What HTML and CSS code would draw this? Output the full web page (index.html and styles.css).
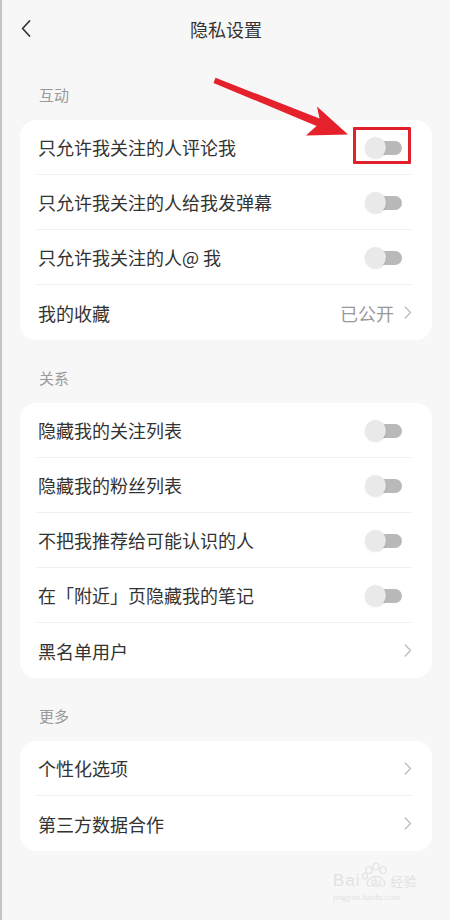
FILE: index.html
```html
<!DOCTYPE html>
<html lang="zh-CN">
<head>
<meta charset="utf-8">
<title>隐私设置</title>
<link rel="stylesheet" href="styles.css">
</head>
<body>
<div class="page">
  <header class="topbar">
    <span class="back">
      <svg width="10" height="17" viewBox="0 0 10 17"><path d="M8.5 1 L1.6 8.5 L8.5 16" fill="none" stroke="#333" stroke-width="1.7" stroke-linecap="round" stroke-linejoin="round"/></svg>
    </span>
    <h1 class="title">隐私设置</h1>
  </header>

  <div class="section-label">互动</div>
  <div class="card">
    <div class="row"><span class="row-text">只允许我关注的人评论我</span><span class="toggle highlighted"><span class="track"></span><span class="thumb"></span><span class="mark"></span></span></div>
    <div class="row"><span class="row-text">只允许我关注的人给我发弹幕</span><span class="toggle"><span class="track"></span><span class="thumb"></span></span></div>
    <div class="row"><span class="row-text">只允许我关注的人@ 我</span><span class="toggle"><span class="track"></span><span class="thumb"></span></span></div>
    <div class="row"><span class="row-text">我的收藏</span><span class="value">已公开</span><span class="chev"><svg width="8" height="13" viewBox="0 0 8 13"><path d="M1.2 1 L6.5 6.5 L1.2 12" fill="none" stroke="#bdbdbd" stroke-width="1.3" stroke-linecap="round" stroke-linejoin="round"/></svg></span></div>
  </div>

  <div class="section-label">关系</div>
  <div class="card">
    <div class="row"><span class="row-text">隐藏我的关注列表</span><span class="toggle"><span class="track"></span><span class="thumb"></span></span></div>
    <div class="row"><span class="row-text">隐藏我的粉丝列表</span><span class="toggle"><span class="track"></span><span class="thumb"></span></span></div>
    <div class="row"><span class="row-text">不把我推荐给可能认识的人</span><span class="toggle"><span class="track"></span><span class="thumb"></span></span></div>
    <div class="row"><span class="row-text">在「附近」页隐藏我的笔记</span><span class="toggle"><span class="track"></span><span class="thumb"></span></span></div>
    <div class="row"><span class="row-text">黑名单用户</span><span class="chev"><svg width="8" height="13" viewBox="0 0 8 13"><path d="M1.2 1 L6.5 6.5 L1.2 12" fill="none" stroke="#bdbdbd" stroke-width="1.3" stroke-linecap="round" stroke-linejoin="round"/></svg></span></div>
  </div>

  <div class="section-label">更多</div>
  <div class="card">
    <div class="row"><span class="row-text">个性化选项</span><span class="chev"><svg width="8" height="13" viewBox="0 0 8 13"><path d="M1.2 1 L6.5 6.5 L1.2 12" fill="none" stroke="#bdbdbd" stroke-width="1.3" stroke-linecap="round" stroke-linejoin="round"/></svg></span></div>
    <div class="row"><span class="row-text">第三方数据合作</span><span class="chev"><svg width="8" height="13" viewBox="0 0 8 13"><path d="M1.2 1 L6.5 6.5 L1.2 12" fill="none" stroke="#bdbdbd" stroke-width="1.3" stroke-linecap="round" stroke-linejoin="round"/></svg></span></div>
  </div>

  <svg class="arrow" width="450" height="920" viewBox="0 0 450 920">
    <polygon points="215.5,77.8 319.5,118.5 317,106.5 348,134.5 306,135.5 316.5,125.9 213.5,83" fill="#e5212b"/>
  </svg>

  <div class="watermark">
    <div class="wm-top">
      <span class="wm-bai">Bai</span>
      <span class="wm-paw">
        <svg width="30" height="28" viewBox="0 0 30 28">
          <g fill="none" stroke="#e2e2e2" stroke-width="1.2">
            <ellipse cx="8" cy="8" rx="3" ry="3.5"/>
            <ellipse cx="15" cy="4.5" rx="3" ry="3.5"/>
            <ellipse cx="22" cy="8" rx="3" ry="3.5"/>
            <ellipse cx="4" cy="14" rx="2.5" ry="3"/>
            <path d="M8 24 C5 24 6 18 10 16 C13 14 17 14 20 16 C24 18 25 24 22 24 Z"/>
          </g>
          <text x="15" y="23" text-anchor="middle" font-size="9" fill="#e0e0e0" font-family="Liberation Sans, sans-serif">du</text>
        </svg>
      </span>
      <span class="wm-jy">经验</span>
    </div>
    <div class="wm-url">jingyan.baidu.com</div>
  </div>
</div>
</body>
</html>
```

FILE: styles.css
```css
* { box-sizing: border-box; }
html, body { margin: 0; padding: 0; }
body {
  width: 450px;
  height: 920px;
  overflow: hidden;
  background: #f7f7f7;
  font-family: "Noto Sans CJK SC", "Noto Sans", sans-serif;
  color: #333;
}
.page {
  position: relative;
  width: 450px;
  height: 920px;
  border-left: 2px solid #c4c4c4;
  background: #f7f7f7;
}
.topbar {
  height: 57px;
  display: flex;
  align-items: center;
  justify-content: center;
  position: relative;
}
.back {
  position: absolute;
  left: 19px;
  top: 20px;
  width: 10px;
  height: 17px;
  display: block;
}
.back svg { display: block; }
.title {
  margin: 0;
  font-size: 18px;
  font-weight: 400;
  color: #333;
  line-height: 22px;
}
.section-label {
  height: 63px;
  padding: 27px 0 0 37px;
  font-size: 15px;
  line-height: 22px;
  color: #9a9a9a;
}
.card {
  margin: 0 18px 0 18px;
  background: #fff;
  border-radius: 16px;
  padding: 0 20px 0 16px;
}
.row {
  height: 55px;
  display: flex;
  align-items: center;
  border-bottom: 1px solid #efefef;
}
.row:last-child { border-bottom: none; }
.row-text {
  flex: 1;
  font-size: 18px;
  line-height: 24px;
  color: #333;
  padding-left: 2px;
}
.value {
  font-size: 18px;
  color: #999;
  margin-right: 10px;
}
.chev {
  width: 8px;
  height: 13px;
  display: block;
}
.chev svg { display: block; }
.toggle {
  position: relative;
  width: 37px;
  height: 21px;
  margin-right: 10px;
}
.track {
  position: absolute;
  left: 8px;
  right: 0;
  top: 4px;
  height: 14px;
  border-radius: 7px;
  background: #b9b9b9;
}
.thumb {
  position: absolute;
  left: 0;
  top: 0;
  width: 21px;
  height: 21px;
  border-radius: 50%;
  background: #e9e9e9;
  box-shadow: 0 1px 2px rgba(0,0,0,0.12);
}
.mark {
  position: absolute;
  left: -12px;
  top: -10px;
  width: 58px;
  height: 37px;
  border: 3px solid #e0202b;
  border-radius: 1px;
}
.arrow {
  position: absolute;
  left: -2px;
  top: 0;
  pointer-events: none;
}
.watermark {
  position: absolute;
  left: 331px;
  top: 862px;
  width: 92px;
  color: #e2e2e2;
}
.wm-top {
  display: flex;
  align-items: flex-end;
  height: 28px;
}
.wm-bai {
  font-family: "Liberation Sans", sans-serif;
  font-size: 17px;
  line-height: 18px;
  letter-spacing: 1px;
  color: #e2e2e2;
}
.wm-paw { display: block; width: 30px; height: 28px; }
.wm-paw svg { display: block; }
.wm-jy {
  font-size: 13px;
  line-height: 18px;
  color: #e2e2e2;
}
.wm-url {
  font-family: "Liberation Serif", serif;
  font-size: 9px;
  line-height: 12px;
  color: #e2e2e2;
  margin-top: 1px;
}
```
